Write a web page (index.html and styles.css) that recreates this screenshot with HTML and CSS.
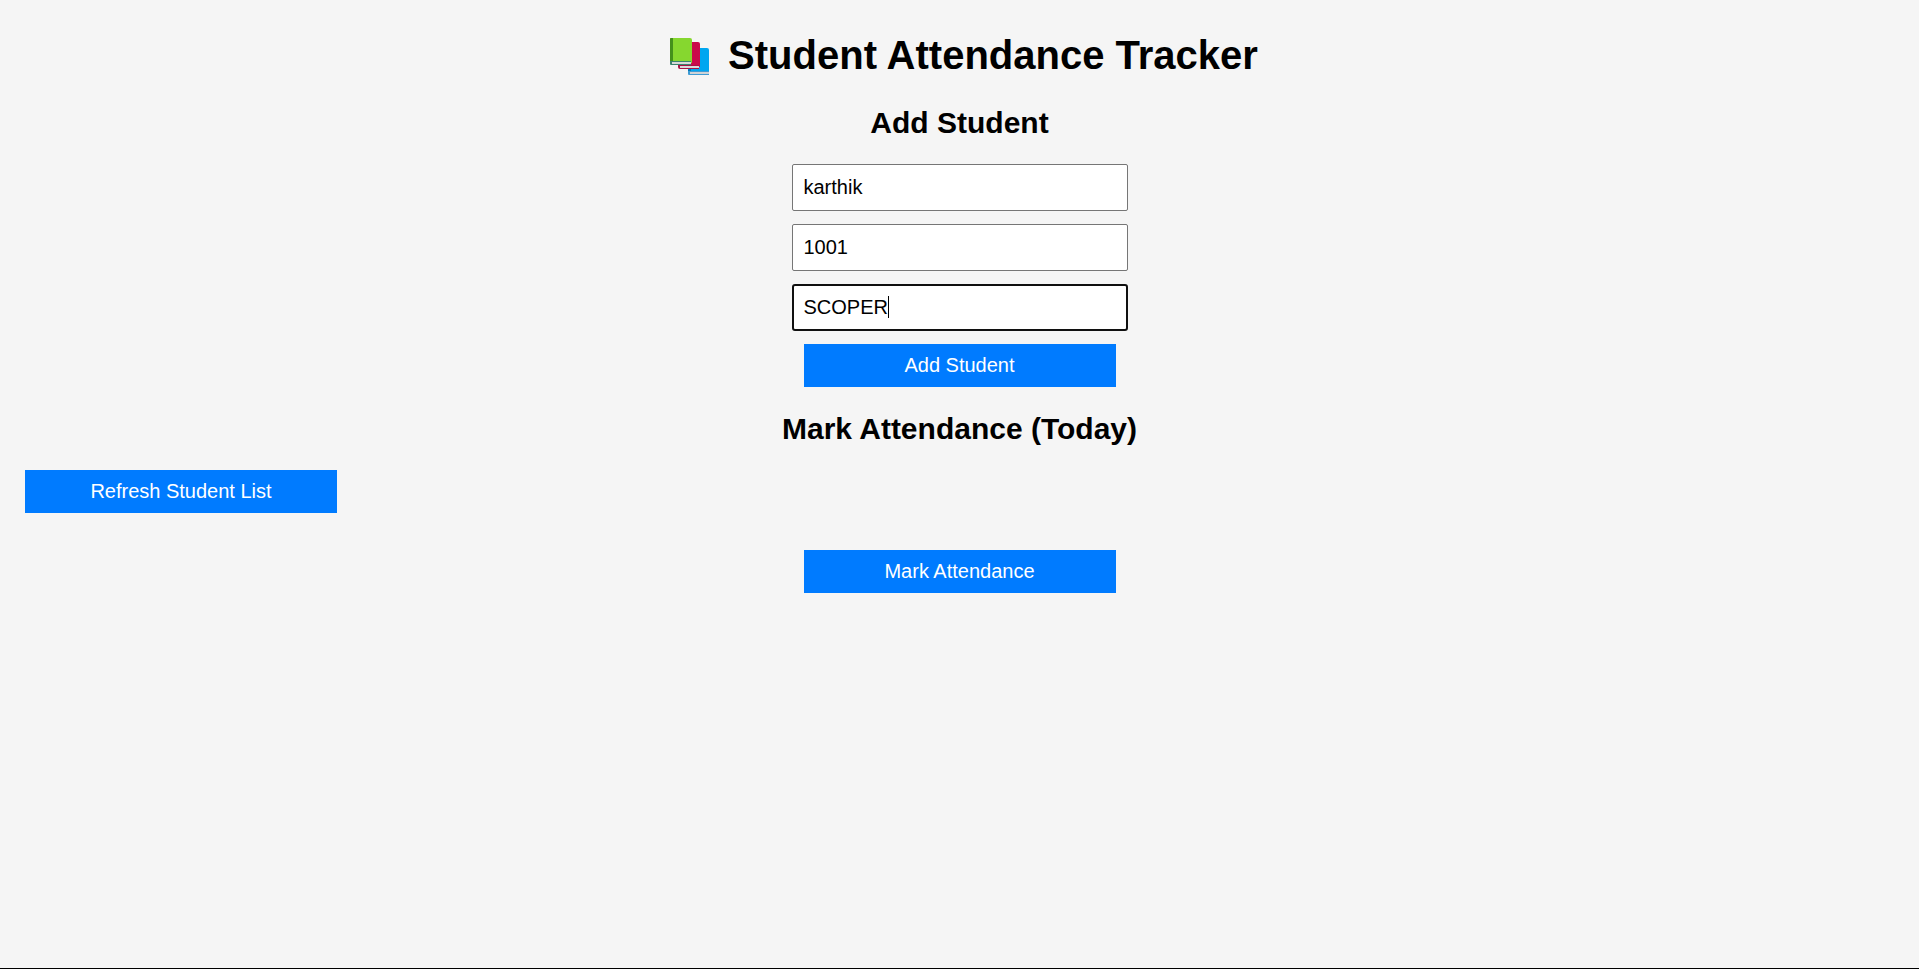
FILE: index.html
```html
<!DOCTYPE html>
<html lang="en">
<head>
<meta charset="utf-8">
<meta name="viewport" content="width=device-width, initial-scale=1">
<title>Student Attendance Tracker</title>
<link rel="stylesheet" href="styles.css">
</head>
<body class="page">
<main class="content">
  <h1 class="title">
    <svg class="books" viewBox="0 0 41 38" aria-hidden="true">
      <path d="M19 10h19q2 0 2 2v22H19z" fill="#00a6f0"/>
      <path d="M19 10h3v24h-3z" fill="#0078b8"/>
      <path d="M19 33h21v4H20q-1 0-1-1z" fill="#3f9bd4"/>
      <path d="M21 34h19v2H21z" fill="#cfd3d6"/>
      <path d="M9 4h20q2 0 2 2v23H9z" fill="#ca0b4a"/>
      <path d="M9 4h3v24H9z" fill="#93063a"/>
      <path d="M9 27h21v4H11q-2 0-2-2z" fill="#a81246"/>
      <path d="M11 28h19v2H11z" fill="#dadada"/>
      <path d="M2 0h19q2 0 2 2v23H1V1q0-1 1-1z" fill="#86d72f"/>
      <path d="M2 0h2v24H1V1q0-1 1-1z" fill="#44911b"/>
      <path d="M1 23h21v4H2q-1 0-1-1z" fill="#3b8270"/>
      <path d="M3 24h19v2H3z" fill="#d8d8d8"/>
    </svg>
    Student Attendance Tracker
  </h1>

  <h2 class="heading">Add Student</h2>
  <form class="form">
    <input class="field" type="text" aria-label="Name" value="karthik">
    <input class="field" type="text" aria-label="Roll number" value="1001">
    <div class="active">
      <input class="field field-active" type="text" aria-label="Class" value="SCOPER">
      <div class="caret-layer" aria-hidden="true"><span class="caret"></span></div>
    </div>
    <button class="button" type="button">Add Student</button>
  </form>

  <h2 class="heading">Mark Attendance (Today)</h2>
  <button class="button" type="button">Refresh Student List</button>
  <form class="form form-attendance">
    <button class="button" type="button">Mark Attendance</button>
  </form>
</main>
</body>
</html>
```
FILE: styles.css
```css
* {
  box-sizing: border-box;
}

.page {
  display: flex;
  flex-direction: column;
  min-height: 100vh;
  margin: 0;
  border-bottom: 1px solid #000;
  background: #f5f5f5;
  color: #000;
  font-family: "Liberation Sans", Arial, sans-serif;
}

.content {
  padding: 28px 25px;
}

.title {
  display: flex;
  justify-content: center;
  align-items: center;
  gap: 18px;
  margin: 0;
  font-size: 40px;
  line-height: 54px;
}

.books {
  flex: none;
  width: 41px;
  height: 38px;
  margin: 4px 0 0 8px;
}

.heading {
  margin: 24px 0;
  font-size: 30px;
  line-height: 34px;
  text-align: center;
}

.form {
  display: flex;
  flex-direction: column;
  align-items: center;
  gap: 13px;
  margin-bottom: 25px;
}

.form-attendance {
  margin-top: 37px;
}

.field {
  display: block;
  width: 336px;
  max-width: 100%;
  height: 47px;
  padding: 11px;
  border: 1px solid #767676;
  border-radius: 2px;
  background: #fff;
  color: #000;
  font: 20px/23px "Liberation Sans", Arial, sans-serif;
}

.active {
  position: relative;
  max-width: 100%;
}

.field-active {
  padding: 10px;
  border: 2px solid #101010;
  border-radius: 3px;
}

.caret-layer {
  position: absolute;
  top: 12px;
  left: 96px;
  pointer-events: none;
}

.caret {
  display: block;
  width: 1px;
  height: 22px;
  background: #000;
}

.button {
  display: block;
  width: 312px;
  max-width: 100%;
  height: 43px;
  padding: 10px;
  border: 0;
  background: #007bff;
  color: #fff;
  font: 20px/23px "Liberation Sans", Arial, sans-serif;
  cursor: pointer;
}
```
